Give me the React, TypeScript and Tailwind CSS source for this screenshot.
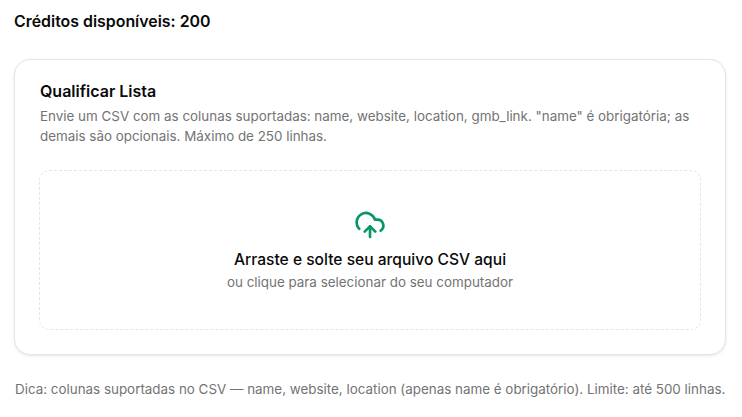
import React from "react";
import { CloudUpload } from "lucide-react";

const App = () => {
  return (
    <div className="min-h-[417px] overflow-hidden bg-white px-[14px] pt-[12px] font-['Inter',sans-serif]">
      <h1 className="text-[15.9px] leading-[20px] font-semibold text-[#0a0a0a]">Créditos disponíveis: 200</h1>

      <div className="mt-[27px] h-[296px] w-[712px] rounded-[16px] border border-[#e5e5e5] bg-white px-6 pt-[21px] shadow-[0_1px_3px_rgba(0,0,0,0.1)]">
        <h2 className="pl-px text-[16px] leading-[20px] font-semibold text-[#0a0a0a]">Qualificar Lista</h2>
        <p className="mt-[5px] pl-px text-[13.4px] leading-[20px] text-[#737373]">
          Envie um CSV com as colunas suportadas: name, website, location, gmb_link. "name" é obrigatória; as demais são opcionais. Máximo de 250 linhas.
        </p>

        <div className="mt-[24px] flex h-[160px] flex-col items-center rounded-[10px] border border-dashed border-[#e5e5e5] pt-[38px]">
          <CloudUpload className="h-8 w-8 text-[#059669]" strokeWidth={2} />
          <p className="mt-[7px] text-[15.6px] leading-[24px] font-medium text-[#0a0a0a]">Arraste e solte seu arquivo CSV aqui</p>
          <p className="text-[13.4px] leading-[20px] text-[#737373]">ou clique para selecionar do seu computador</p>
        </div>
      </div>

      <p className="mt-[24px] pl-px text-[13.4px] leading-[20px] whitespace-nowrap text-[#737373]">
        Dica: colunas suportadas no CSV — name, website, location (apenas name é obrigatório). Limite: até 500 linhas.
      </p>
    </div>
  );
};

export default App;
